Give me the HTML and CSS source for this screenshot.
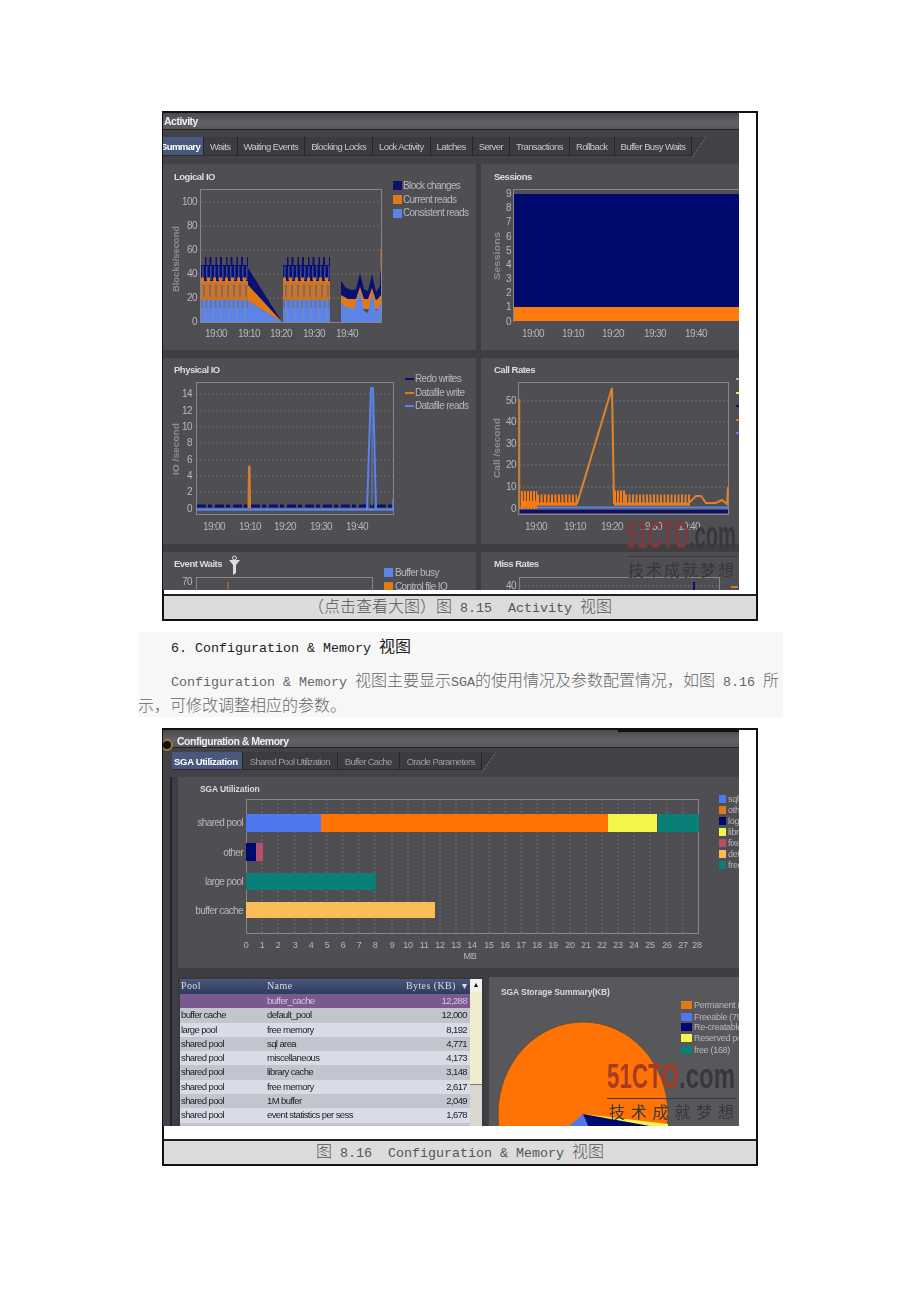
FILE: index.html
```html
<!DOCTYPE html>
<html lang="en">
<head>
  <meta charset="UTF-8">
  <meta name="viewport" content="width=device-width, initial-scale=1">
  <title>Activity / Configuration &amp; Memory</title>
  <link rel="stylesheet" href="styles.css">
</head>
<body>
  <div class="page">

    <div class="figure fig-activity">
      <div class="shot">
        <div class="shot-inner">
          <div class="title-bar">Activity</div>
          <div class="tabs">
            <span class="tab tab-on tab-clip">Summary</span>
            <span class="tab">Waits</span>
            <span class="tab">Waiting Events</span>
            <span class="tab">Blocking Locks</span>
            <span class="tab">Lock Activity</span>
            <span class="tab">Latches</span>
            <span class="tab">Server</span>
            <span class="tab">Transactions</span>
            <span class="tab">Rollback</span>
            <span class="tab">Buffer Busy Waits</span>
            <span class="tab-end"></span>
          </div>
          <div class="panels">
            <div class="panel">
              <svg viewBox="163 163 313 186" width="313" height="186">
                <defs>
                  <g id="logical-block">
                    <rect x="201" y="256" width="47" height="24" fill="#0a1070"/>
                    <line x1="201" x2="248" y1="260" y2="260" stroke="#4e4e53" stroke-width="8" stroke-dasharray="4 1.500 3 2"/>
                    <line x1="202" x2="248" y1="272" y2="272" stroke="#39468f" stroke-width="14" stroke-dasharray="1.500 2.500"/>
                    <rect x="201" y="280" width="47" height="19" fill="#c9742c"/>
                    <line x1="201" x2="248" y1="279" y2="279" stroke="#e07a18" stroke-width="5" stroke-dasharray="3 3"/>
                    <line x1="203" x2="248" y1="290" y2="290" stroke="#8c6a52" stroke-width="12" stroke-dasharray="2 4"/>
                    <rect x="201" y="299" width="47" height="22" fill="#5c83e6"/>
                    <line x1="201" x2="248" y1="303" y2="303" stroke="#67759b" stroke-width="8" stroke-dasharray="2 2.500"/>
                    <line x1="204" x2="248" y1="314" y2="314" stroke="#6f87c4" stroke-width="13" stroke-dasharray="2 6"/>
                  </g>
                </defs>
                <text class="p-title" x="174" y="178.500">Logical IO</text>
                <g class="grid">
                  <line x1="201" x2="381" y1="201" y2="201"/>
                  <line x1="201" x2="381" y1="225" y2="225"/>
                  <line x1="201" x2="381" y1="249" y2="249"/>
                  <line x1="201" x2="381" y1="273" y2="273"/>
                  <line x1="201" x2="381" y1="297" y2="297"/>
                </g>
                <rect class="frame" x="200.500" y="188.500" width="181" height="133"/>
                <use href="#logical-block"/>
                <polygon points="248,267 282,321 248,284" fill="#0a1070"/>
                <polygon points="248,284 282,321 248,300" fill="#e07a18"/>
                <polygon points="248,300 282,321 248,321" fill="#5c83e6"/>
                <use href="#logical-block" x="82"/>
                <polygon points="341,280 346,287 352,289 356,288 360,272 364,288 368,290 372,273 376,291 380,285 381,262 381,298 341,298" fill="#0a1070"/>
                <polygon points="341,294 348,298 356,298 360,286 364,298 368,298 372,287 376,300 381,294 381,308 341,308" fill="#e07a18"/>
                <polygon points="341,302 346,306 354,308 360,290 364,310 368,312 372,292 376,310 381,303 381,321 341,321" fill="#5c83e6"/>
                <line x1="381" x2="381" y1="248" y2="270" stroke="#c9742c"/>
                <g class="lbl" text-anchor="end">
                  <text x="197" y="204">100</text><text x="197" y="228">80</text><text x="197" y="252">60</text>
                  <text x="197" y="276">40</text><text x="197" y="300">20</text><text x="197" y="324">0</text>
                </g>
                <g class="lbl" text-anchor="middle">
                  <text x="216" y="336">19:00</text><text x="249" y="336">19:10</text><text x="281" y="336">19:20</text>
                  <text x="314" y="336">19:30</text><text x="347" y="336">19:40</text>
                </g>
                <text class="axis" transform="translate(179,291) rotate(-90)" textLength="66" lengthAdjust="spacingAndGlyphs">Blocks/second</text>
                <rect x="393" y="180" width="9" height="9" fill="#0a1070"/>
                <rect x="393" y="194" width="9" height="9" fill="#e07a18"/>
                <rect x="393" y="208" width="9" height="9" fill="#5c83e6"/>
                <g class="lbl">
                  <text x="403" y="188">Block changes</text><text x="403" y="202">Current reads</text><text x="403" y="215">Consistent reads</text>
                </g>
              </svg>
            </div>
            <div class="panel">
              <svg viewBox="481 163 258 186" width="258" height="186">
                <text class="p-title" x="494" y="178.500">Sessions</text>
                <line class="frame" x1="514" x2="739" y1="188.500" y2="188.500"/>
                <line class="frame" x1="513.500" x2="513.500" y1="188" y2="321"/>
                <rect x="514" y="193" width="225" height="113" fill="#000a6e"/>
                <rect x="514" y="306" width="225" height="14" fill="#ff7a0c"/>
                <g class="lbl" text-anchor="end">
                  <text x="511" y="196">9</text><text x="511" y="210">8</text><text x="511" y="224">7</text><text x="511" y="239">6</text>
                  <text x="511" y="253">5</text><text x="511" y="267">4</text><text x="511" y="281">3</text><text x="511" y="295">2</text>
                  <text x="511" y="309">1</text><text x="511" y="324">0</text>
                </g>
                <g class="lbl" text-anchor="middle">
                  <text x="533" y="336">19:00</text><text x="573" y="336">19:10</text><text x="613" y="336">19:20</text>
                  <text x="655" y="336">19:30</text><text x="696" y="336">19:40</text>
                </g>
                <text class="axis" transform="translate(500,279) rotate(-90)" textLength="48" lengthAdjust="spacingAndGlyphs">Sessions</text>
              </svg>
            </div>
            <div class="panel">
              <svg viewBox="163 357 313 186" width="313" height="186">
                <text class="p-title" x="174" y="371.500">Physical IO</text>
                <g class="grid">
                  <line x1="196" x2="394" y1="393" y2="393"/><line x1="196" x2="394" y1="410" y2="410"/>
                  <line x1="196" x2="394" y1="426" y2="426"/><line x1="196" x2="394" y1="442" y2="442"/>
                  <line x1="196" x2="394" y1="459" y2="459"/><line x1="196" x2="394" y1="475" y2="475"/>
                  <line x1="196" x2="394" y1="491" y2="491"/>
                </g>
                <rect class="frame" x="196.500" y="381.500" width="197" height="132"/>
                <line x1="197" x2="393" y1="505" y2="505" stroke="#0a1070" stroke-width="3" stroke-dasharray="9 2 4 3"/>
                <line x1="197" x2="393" y1="508.500" y2="508.500" stroke="#5c83e6" stroke-width="2.500"/>
                <polyline points="248,507 248.500,465 250,465 250.500,507" fill="#e07a18" stroke="#d98030"/>
                <polyline points="367,508 371,387 373,387 376,508" fill="none" stroke="#5c83e6" stroke-width="2"/>
                <line x1="372" x2="372" y1="395" y2="505" stroke="#5c83e6"/>
                <line x1="393" x2="393" y1="498" y2="510" stroke="#5c83e6" stroke-width="1.500"/>
                <g class="lbl" text-anchor="end">
                  <text x="192" y="396">14</text><text x="192" y="413">12</text><text x="192" y="429">10</text><text x="192" y="445">8</text>
                  <text x="192" y="462">6</text><text x="192" y="478">4</text><text x="192" y="494">2</text><text x="192" y="511">0</text>
                </g>
                <g class="lbl" text-anchor="middle">
                  <text x="214" y="529">19:00</text><text x="250" y="529">19:10</text><text x="285" y="529">19:20</text>
                  <text x="321" y="529">19:30</text><text x="357" y="529">19:40</text>
                </g>
                <text class="axis" transform="translate(179,474) rotate(-90)" textLength="52" lengthAdjust="spacingAndGlyphs">IO /second</text>
                <line x1="405" x2="414" y1="378" y2="378" stroke="#0a1070" stroke-width="2"/>
                <line x1="405" x2="414" y1="392" y2="392" stroke="#e07a18" stroke-width="2"/>
                <line x1="405" x2="414" y1="405" y2="405" stroke="#5c83e6" stroke-width="2"/>
                <g class="lbl">
                  <text x="415" y="381">Redo writes</text><text x="415" y="395">Datafile write</text><text x="415" y="408">Datafile reads</text>
                </g>
              </svg>
            </div>
            <div class="panel">
              <svg viewBox="481 357 258 186" width="258" height="186">
                <text class="p-title" x="494" y="371.500">Call Rates</text>
                <g class="grid">
                  <line x1="519" x2="728" y1="400" y2="400"/><line x1="519" x2="728" y1="421" y2="421"/>
                  <line x1="519" x2="728" y1="443" y2="443"/><line x1="519" x2="728" y1="464" y2="464"/>
                  <line x1="519" x2="728" y1="486" y2="486"/>
                </g>
                <rect class="frame" x="518.500" y="381.500" width="210" height="132"/>
                <rect x="520" y="509" width="208" height="3" fill="#0a1070"/>
                <line x1="520" x2="728" y1="506.500" y2="506.500" stroke="#5c83e6" stroke-width="2"/>
                <line x1="519.500" x2="519.500" y1="398" y2="508" stroke="#e07a18" stroke-width="1.500"/>
                <line x1="521" x2="537" y1="499" y2="499" stroke="#ff7a0c" stroke-width="18" stroke-dasharray="2 1"/>
                <line x1="521" x2="537" y1="503" y2="503" stroke="#ff7a0c" stroke-width="6"/>
                <line x1="537" x2="577" y1="499" y2="499" stroke="#ff7a0c" stroke-width="11" stroke-dasharray="2 1.500"/>
                <line x1="537" x2="577" y1="503" y2="503" stroke="#ff7a0c" stroke-width="3"/>
                <polyline points="577,503 612,387 614,503" fill="none" stroke="#e0842e" stroke-width="2"/>
                <line x1="614" x2="625" y1="497" y2="497" stroke="#ff7a0c" stroke-width="15" stroke-dasharray="2 1"/>
                <line x1="625" x2="690" y1="499" y2="499" stroke="#e0802a" stroke-width="11" stroke-dasharray="2 1.500"/>
                <line x1="614" x2="690" y1="503" y2="503" stroke="#e0802a" stroke-width="3"/>
                <polyline points="690,501 696,495 701,495 706,502 716,502 722,499 727,503 728,486" fill="none" stroke="#e0802a" stroke-width="2"/>
                <g class="lbl" text-anchor="end">
                  <text x="516" y="403">50</text><text x="516" y="424">40</text><text x="516" y="446">30</text>
                  <text x="516" y="467">20</text><text x="516" y="489">10</text><text x="516" y="511">0</text>
                </g>
                <g class="lbl" text-anchor="middle">
                  <text x="536" y="529">19:00</text><text x="575" y="529">19:10</text><text x="612" y="529">19:20</text>
                  <text x="651" y="529">19:30</text><text x="689" y="529">19:40</text>
                </g>
                <text class="axis" transform="translate(500,477) rotate(-90)" textLength="60" lengthAdjust="spacingAndGlyphs">Call /second</text>
                <line x1="736" x2="739" y1="378" y2="378" stroke="#c8b26a" stroke-width="2"/>
                <line x1="736" x2="739" y1="392" y2="392" stroke="#e8e060" stroke-width="2"/>
                <line x1="736" x2="739" y1="405" y2="405" stroke="#0a1070" stroke-width="2"/>
                <line x1="736" x2="739" y1="419" y2="419" stroke="#e07a18" stroke-width="2"/>
                <line x1="736" x2="739" y1="432" y2="432" stroke="#5c83e6" stroke-width="2"/>
              </svg>
            </div>
            <div class="panel">
              <svg viewBox="163 550 313 39" width="313" height="39">
                <text class="p-title" x="174" y="564.500">Event Waits</text>
                <path d="M229 558h11l-4 5v8l-3 2v-10z" fill="#ddd"/>
                <circle cx="234.500" cy="556" r="2" fill="none" stroke="#ddd"/>
                <rect class="frame" x="196.500" y="575.500" width="176" height="30"/>
                <line x1="228" x2="228" y1="580" y2="589" stroke="#c9742c"/>
                <text class="lbl" x="192" y="583" text-anchor="end">70</text>
                <rect x="384" y="566" width="9" height="9" fill="#5c83e6"/>
                <rect x="384" y="580" width="9" height="9" fill="#e07a18"/>
                <text class="lbl" x="395" y="574">Buffer busy</text>
                <text class="lbl" x="395" y="588">Control file IO</text>
              </svg>
            </div>
            <div class="panel">
              <svg viewBox="481 550 258 39" width="258" height="39">
                <text class="p-title" x="494" y="564.500">Miss Rates</text>
                <rect class="frame" x="519.500" y="575.500" width="200" height="30"/>
                <line class="grid-line" x1="520" x2="719" y1="584" y2="584"/>
                <line x1="694" x2="694" y1="580" y2="589" stroke="#0a1070" stroke-width="2"/>
                <text class="lbl" x="516" y="587" text-anchor="end">40</text>
                <line x1="731" x2="738" y1="585" y2="585" stroke="#e07a18" stroke-width="2"/>
              </svg>
            </div>
          </div>
        </div>
        <svg class="watermark" viewBox="0 0 120 80" width="120" height="80">
          <text class="wm-red" x="7" y="38" textLength="63" lengthAdjust="spacingAndGlyphs">51CTO</text>
          <text class="wm-com" x="70" y="38" textLength="47" lengthAdjust="spacingAndGlyphs">.com</text>
          <line x1="7" x2="119" y1="46.500" y2="46.500" stroke="#3a3a3a"/>
          <text class="wm-zh" x="9" y="66" textLength="106">技术成就梦想</text>
        </svg>
      </div>
      <div class="caption">（点击查看大图）图<span class="lat"> 8.15  Activity </span>视图</div>
    </div>

    <div class="notes">
      <h2 class="notes-head"><span class="lat">6. Configuration &amp; Memory </span>视图</h2>
      <p class="notes-text"><span class="lat">Configuration &amp; Memory </span>视图主要显示<span class="lat">SGA</span>的使用情况及参数配置情况，如图<span class="lat"> 8.16 </span>所示，可修改调整相应的参数。</p>
    </div>

    <div class="figure fig-config">
      <div class="shot">
        <div class="shot-inner">
          <div class="title-bar">
            <span class="cfg-icon"></span>
            Configuration &amp; Memory
          </div>
          <div class="tabs">
            <span class="tab tab-on">SGA Utilization</span>
            <span class="tab tab-dim">Shared Pool Utilization</span>
            <span class="tab tab-dim">Buffer Cache</span>
            <span class="tab tab-dim">Oracle Parameters</span>
            <span class="tab-end"></span>
          </div>
          <div class="cfg-body">
            <div class="panel cfg-top">
              <svg viewBox="178 777 561 191" width="561" height="191">
                <text class="p-title small" x="200" y="792">SGA Utilization</text>
                <g class="grid">
                  <line x1="262" x2="262" y1="799" y2="933"/><line x1="278" x2="278" y1="799" y2="933"/><line x1="295" x2="295" y1="799" y2="933"/>
                  <line x1="311" x2="311" y1="799" y2="933"/><line x1="327" x2="327" y1="799" y2="933"/><line x1="343" x2="343" y1="799" y2="933"/>
                  <line x1="359" x2="359" y1="799" y2="933"/><line x1="375" x2="375" y1="799" y2="933"/><line x1="392" x2="392" y1="799" y2="933"/>
                  <line x1="408" x2="408" y1="799" y2="933"/><line x1="424" x2="424" y1="799" y2="933"/><line x1="440" x2="440" y1="799" y2="933"/>
                  <line x1="456" x2="456" y1="799" y2="933"/><line x1="472" x2="472" y1="799" y2="933"/><line x1="489" x2="489" y1="799" y2="933"/>
                  <line x1="505" x2="505" y1="799" y2="933"/><line x1="521" x2="521" y1="799" y2="933"/><line x1="537" x2="537" y1="799" y2="933"/>
                  <line x1="553" x2="553" y1="799" y2="933"/><line x1="570" x2="570" y1="799" y2="933"/><line x1="586" x2="586" y1="799" y2="933"/>
                  <line x1="602" x2="602" y1="799" y2="933"/><line x1="618" x2="618" y1="799" y2="933"/><line x1="634" x2="634" y1="799" y2="933"/>
                  <line x1="650" x2="650" y1="799" y2="933"/><line x1="667" x2="667" y1="799" y2="933"/><line x1="683" x2="683" y1="799" y2="933"/>
                </g>
                <rect class="frame" x="246.500" y="799.500" width="452" height="134"/>
                <rect x="246" y="814" width="75" height="18" fill="#4f78ee"/>
                <rect x="321" y="814" width="287" height="18" fill="#ff7305"/>
                <rect x="608" y="814" width="49" height="18" fill="#f4f54c"/>
                <rect x="658" y="814" width="41" height="18" fill="#0a7f78"/>
                <rect x="246" y="843" width="10" height="18" fill="#000a6e"/>
                <rect x="256" y="843" width="7" height="18" fill="#b4506a"/>
                <rect x="246" y="873" width="130" height="17" fill="#0a7f78"/>
                <rect x="246" y="902" width="189" height="16" fill="#fbbd55"/>
                <g class="lbl" text-anchor="end">
                  <text x="243" y="826">shared pool</text><text x="243" y="856">other</text>
                  <text x="243" y="885">large pool</text><text x="243" y="914">buffer cache</text>
                </g>
                <g class="lbl tick" text-anchor="middle">
                  <text x="246" y="948">0</text><text x="262" y="948">1</text><text x="278" y="948">2</text><text x="295" y="948">3</text>
                  <text x="311" y="948">4</text><text x="327" y="948">5</text><text x="343" y="948">6</text><text x="359" y="948">7</text>
                  <text x="375" y="948">8</text><text x="392" y="948">9</text><text x="408" y="948">10</text><text x="424" y="948">11</text>
                  <text x="440" y="948">12</text><text x="456" y="948">13</text><text x="472" y="948">14</text><text x="489" y="948">15</text>
                  <text x="505" y="948">16</text><text x="521" y="948">17</text><text x="537" y="948">18</text><text x="553" y="948">19</text>
                  <text x="570" y="948">20</text><text x="586" y="948">21</text><text x="602" y="948">22</text><text x="618" y="948">23</text>
                  <text x="634" y="948">24</text><text x="650" y="948">25</text><text x="667" y="948">26</text><text x="683" y="948">27</text>
                  <text x="697" y="948">28</text><text x="470" y="959">MB</text>
                </g>
                <rect x="719" y="795" width="7" height="8" fill="#4f78ee"/>
                <rect x="719" y="806" width="7" height="8" fill="#e07a18"/>
                <rect x="719" y="817" width="7" height="8" fill="#000a6e"/>
                <rect x="719" y="828" width="7" height="8" fill="#f4f54c"/>
                <rect x="719" y="839" width="7" height="8" fill="#b4506a"/>
                <rect x="719" y="850" width="7" height="8" fill="#fbbd55"/>
                <rect x="719" y="861" width="7" height="8" fill="#0a7f78"/>
                <g class="lbl tick">
                  <text x="728" y="802">sql</text><text x="728" y="813">othe</text><text x="728" y="824">log_</text>
                  <text x="728" y="835">libra</text><text x="728" y="846">fixe</text><text x="728" y="857">defa</text><text x="728" y="868">free</text>
                </g>
              </svg>
            </div>
            <div class="cfg-bottom">
              <div class="pool-table">
                <div class="pool-head pool-row">
                  <span>Pool</span><span>Name</span><span class="num">Bytes (KB) &nbsp;▾</span>
                </div>
                <div class="pool-row pool-on"><span></span><span>buffer_cache</span><span class="num">12,288</span></div>
                <div class="pool-row"><span>buffer cache</span><span>default_pool</span><span class="num">12,000</span></div>
                <div class="pool-row pool-alt"><span>large pool</span><span>free memory</span><span class="num">8,192</span></div>
                <div class="pool-row"><span>shared pool</span><span>sql area</span><span class="num">4,771</span></div>
                <div class="pool-row pool-alt"><span>shared pool</span><span>miscellaneous</span><span class="num">4,173</span></div>
                <div class="pool-row"><span>shared pool</span><span>library cache</span><span class="num">3,148</span></div>
                <div class="pool-row pool-alt"><span>shared pool</span><span>free memory</span><span class="num">2,617</span></div>
                <div class="pool-row"><span>shared pool</span><span>1M buffer</span><span class="num">2,049</span></div>
                <div class="pool-row pool-alt"><span>shared pool</span><span>event statistics per sess</span><span class="num">1,678</span></div>
                <div class="pool-row"><span>shared pool</span><span>dictionary cache</span><span class="num">1,571</span></div>
                <div class="scrollbar">
                  <span class="scroll-up">▲</span>
                  <span class="scroll-thumb"></span>
                </div>
              </div>
              <div class="panel pie-panel">
                <svg viewBox="489 977 250 149" width="250" height="149">
                  <text class="p-title small" x="501" y="995">SGA Storage Summary(KB)</text>
                  <ellipse cx="583" cy="1114" rx="85" ry="92" fill="#ff7305" stroke="#6a5030"/>
                  <polygon points="583,1114 668,1124 668,1140 583,1140" fill="#f4f54c"/>
                  <polygon points="583,1114 650,1126 630,1140 583,1140" fill="#000a6e"/>
                  <polygon points="583,1114 569,1126 583,1140 590,1130" fill="#4f78ee"/>
                  <rect x="681" y="1001" width="11" height="8" fill="#e07a18"/>
                  <rect x="681" y="1013" width="11" height="8" fill="#4f78ee"/>
                  <rect x="681" y="1023" width="11" height="8" fill="#000a6e"/>
                  <rect x="681" y="1034" width="11" height="8" fill="#f4f54c"/>
                  <rect x="681" y="1046" width="11" height="8" fill="#0a7f78"/>
                  <g class="lbl tick">
                    <text x="694" y="1008">Permanent (1</text><text x="694" y="1020">Freeable (79</text><text x="694" y="1030">Re-creatable</text>
                    <text x="694" y="1041">Reserved po</text><text x="694" y="1053">free (168)</text>
                  </g>
                </svg>
              </div>
            </div>
          </div>
        </div>
        <svg class="watermark wm-big" viewBox="0 0 140 70" width="140" height="70">
          <text class="wm-red wm-over" x="8" y="32" textLength="72" lengthAdjust="spacingAndGlyphs">51CTO</text>
          <text class="wm-com" x="80" y="32" textLength="56" lengthAdjust="spacingAndGlyphs">.com</text>
          <line x1="8" x2="138" y1="42.500" y2="42.500" stroke="#3a3a3a"/>
          <text class="wm-zh" x="10" y="62" textLength="125">技术成就梦想</text>
        </svg>
      </div>
      <div class="caption">图<span class="lat"> 8.16  Configuration &amp; Memory </span>视图</div>
    </div>

  </div>
</body>
</html>
```

FILE: styles.css
```css
body {
  margin: 0;
  background: #fff;
  font-family: "Liberation Sans", Arial, sans-serif;
}
.page {
  padding-top: 111px;
  height: 1191px;
  overflow: hidden;
}
.lat {
  font-family: "Liberation Mono", monospace;
  font-size: 13.33px;
  line-height: 0;
  white-space: pre;
}

/* figure boxes */
.figure {
  width: 592px;
  margin-left: 162px;
  border: 2px solid #111;
  background: #fff;
}
.shot {
  position: relative;
  width: 576px;
  margin-left: -1px;
  overflow: hidden;
}
.fig-activity .shot {
  height: 477px;
  margin-bottom: 4px;
}
.fig-config .shot {
  height: 396px;
  margin-bottom: 13px;
}
.shot-inner {
  height: 100%;
  background: #3f3f43;
  filter: blur(0.6px);
}
.caption {
  height: 23px;
  line-height: 24px;
  border-top: 2px solid #222;
  background: #dcdcdc;
  color: #555;
  font-family: "Liberation Mono", "Noto Sans CJK SC", monospace;
  font-size: 16px;
  font-weight: 300;
  text-align: center;
}

/* title + tabs */
.title-bar {
  height: 16px;
  line-height: 17px;
  padding-left: 1px;
  background: linear-gradient(#4a4a4e, #636367 60%, #58585c);
  border-bottom: 1px solid #222;
  color: #eee;
  font-size: 10.500px;
  font-weight: bold;
  letter-spacing: -0.5px;
}
.fig-config .title-bar {
  height: 17px;
  line-height: 22px;
  padding-left: 14px;
  position: relative;
}
.fig-config .title-bar::after {
  content: "";
  position: absolute;
  top: 0;
  right: 0;
  width: 121px;
  height: 2px;
  background: #111;
}
.cfg-icon {
  position: absolute;
  left: -2px;
  top: 9px;
  width: 8px;
  height: 8px;
  border-radius: 50%;
  background: #111;
  border: 2px solid #9a7a30;
}
.tabs {
  display: flex;
  height: 19px;
  padding: 7px 0 8px;
  background: #434347;
  color: #c9c9c9;
  font-size: 9.500px;
  letter-spacing: -0.6px;
  line-height: 19px;
}
.fig-config .tabs {
  height: 18px;
  padding: 4px 0 7px 9px;
}
.tab {
  padding: 0 6px;
  background: #3c3c40;
  border-right: 1px solid #252528;
  border-bottom: 1px solid #2c2c30;
  white-space: nowrap;
}
.tab-on {
  background: #49597e;
  color: #fff;
  font-weight: bold;
}
.tab-clip {
  padding: 0 3px 0 0;
  text-indent: -2px;
}
.fig-config .tab-on {
  padding: 0 4px 0 2px;
  letter-spacing: -0.300px;
}
.tab-dim {
  color: #9d9da0;
  padding: 0 7px;
  letter-spacing: -0.700px;
}
.tab-end {
  width: 14px;
  height: 20px;
  background: linear-gradient(to top left, #434347 48%, #77777c 50%, #3c3c40 52%);
}

/* chart panels */
.panels {
  display: grid;
  grid-template-columns: 313px 258px;
  grid-template-rows: 186px 186px 39px;
  column-gap: 5px;
  row-gap: 8px;
}
.panel {
  background: #4e4e53;
  overflow: hidden;
}
.panel svg {
  display: block;
}
.p-title {
  fill: #dcdcdc;
  font-size: 9.500px;
  font-weight: bold;
  letter-spacing: -0.500px;
}
.p-title.small {
  font-size: 8.500px;
  letter-spacing: -0.100px;
}
.lbl {
  fill: #b9b9bb;
  font-size: 10px;
  letter-spacing: -0.600px;
}
.lbl.tick {
  font-size: 9px;
  letter-spacing: -0.300px;
}
.axis {
  fill: #8e8e90;
  font-size: 9px;
  font-weight: bold;
}
.frame {
  fill: none;
  stroke: #87878a;
}
.grid line,
.grid-line {
  stroke: #707074;
  stroke-dasharray: 2 2;
}

/* configuration view */
.cfg-body {
  padding-left: 15px;
  background: linear-gradient(to right, #434347 7px, #1f2238 7px, #1f2238 9px, #3f3f43 9px);
}
.cfg-top {
  height: 191px;
}
.cfg-bottom {
  display: grid;
  grid-template-columns: 306px 250px;
  column-gap: 5px;
  margin-top: 9px;
}
.pool-table {
  position: relative;
  height: 149px;
  padding: 2px 0 0 2px;
  background: #3a3a3e;
  overflow: hidden;
}
.pool-row {
  display: grid;
  grid-template-columns: 86px 110px 94px;
  width: 290px;
  height: 14.300px;
  line-height: 14px;
  background: #c2c4ce;
  color: #1d1d22;
  font-size: 9.500px;
  letter-spacing: -0.600px;
}
.pool-alt {
  background: #d9dbe7;
}
.pool-row span {
  padding-left: 1px;
  white-space: nowrap;
}
.pool-row .num {
  padding-right: 3px;
  text-align: right;
}
.pool-head {
  height: 15px;
  background: linear-gradient(#49577c, #2f3a5e);
  color: #ddd;
  font-family: "Liberation Serif", serif;
  font-size: 10px;
  letter-spacing: 0.4px;
}
.pool-on {
  background: #7a5a8e;
  color: #d9c2e4;
}
.scrollbar {
  position: absolute;
  top: 2px;
  right: 2px;
  width: 12px;
  height: 147px;
  background: #d8d8d0;
}
.scroll-up {
  display: block;
  height: 13px;
  background: #f2f2ea;
  color: #111;
  font-size: 7px;
  line-height: 12px;
  text-align: center;
}
.scroll-thumb {
  display: block;
  height: 92px;
  background: #f0eccc;
  border-bottom: 1px solid #777;
}
.pie-panel {
  height: 149px;
  background: #57575c;
}

/* site watermark */
.watermark {
  position: absolute;
  right: 0;
  bottom: 0;
  filter: blur(0.5px);
}
.wm-red {
  fill: #7c3a3e;
  font-size: 39px;
  font-weight: bold;
}
.wm-over {
  fill: #a83a22;
  font-size: 35px;
}
.wm-com {
  fill: #38383a;
  font-size: 39px;
  font-weight: bold;
}
.wm-big .wm-com {
  font-size: 35px;
}
.wm-zh {
  fill: #38383a;
  font-family: "Noto Sans CJK SC", sans-serif;
  font-size: 16px;
}

/* text between the figures */
.notes {
  width: 645px;
  margin: 11px 0 11px 138px;
  background: #f7f7f7;
}
.notes-head {
  margin: 0;
  height: 30px;
  padding-left: 33px;
  color: #222;
  font-family: "Noto Sans CJK SC", sans-serif;
  font-size: 16px;
  font-weight: 400;
  line-height: 26px;
}
.notes-text {
  margin: 0;
  padding-top: 5px;
  padding-right: 2px;
  height: 50px;
  color: #666;
  font-family: "Noto Sans CJK SC", sans-serif;
  font-size: 16px;
  font-weight: 300;
  line-height: 25px;
  text-indent: 33px;
}
```
